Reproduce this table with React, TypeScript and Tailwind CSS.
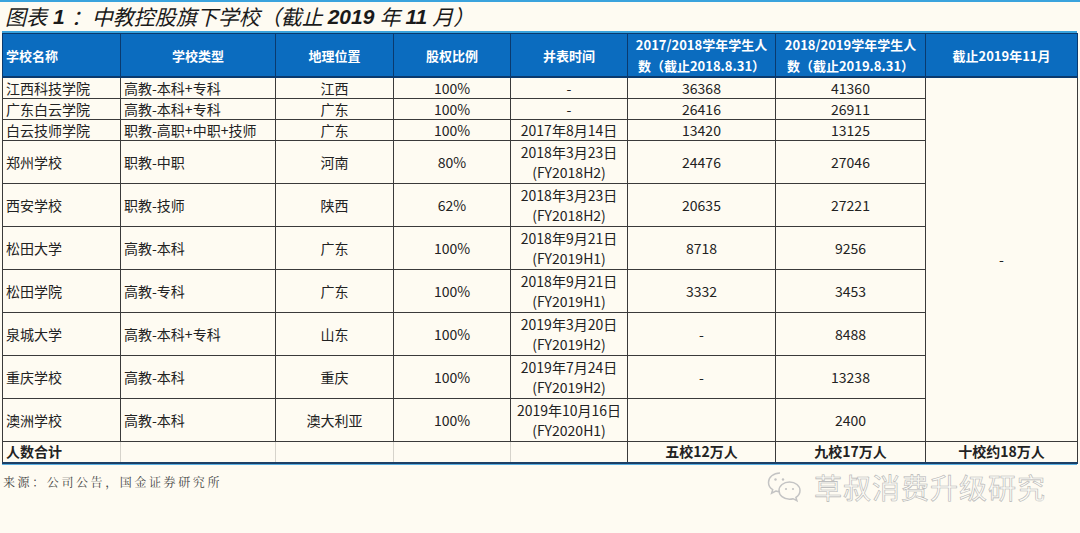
import React from 'react';

type Row = {
  name: string;
  type: string;
  region: string;
  share: string;
  date: string[];
  y2018: string;
  y2019: string;
  tall?: boolean;
};

const rows: Row[] = [
  { name: '江西科技学院', type: '高教-本科+专科', region: '江西', share: '100%', date: ['-'], y2018: '36368', y2019: '41360' },
  { name: '广东白云学院', type: '高教-本科+专科', region: '广东', share: '100%', date: ['-'], y2018: '26416', y2019: '26911' },
  { name: '白云技师学院', type: '职教-高职+中职+技师', region: '广东', share: '100%', date: ['2017年8月14日'], y2018: '13420', y2019: '13125' },
  { name: '郑州学校', type: '职教-中职', region: '河南', share: '80%', date: ['2018年3月23日', '(FY2018H2)'], y2018: '24476', y2019: '27046', tall: true },
  { name: '西安学校', type: '职教-技师', region: '陕西', share: '62%', date: ['2018年3月23日', '(FY2018H2)'], y2018: '20635', y2019: '27221', tall: true },
  { name: '松田大学', type: '高教-本科', region: '广东', share: '100%', date: ['2018年9月21日', '(FY2019H1)'], y2018: '8718', y2019: '9256', tall: true },
  { name: '松田学院', type: '高教-专科', region: '广东', share: '100%', date: ['2018年9月21日', '(FY2019H1)'], y2018: '3332', y2019: '3453', tall: true },
  { name: '泉城大学', type: '高教-本科+专科', region: '山东', share: '100%', date: ['2019年3月20日', '(FY2019H2)'], y2018: '-', y2019: '8488', tall: true },
  { name: '重庆学校', type: '高教-本科', region: '重庆', share: '100%', date: ['2019年7月24日', '(FY2019H2)'], y2018: '-', y2019: '13238', tall: true },
  { name: '澳洲学校', type: '高教-本科', region: '澳大利亚', share: '100%', date: ['2019年10月16日', '(FY2020H1)'], y2018: '', y2019: '2400', tall: true },
];

const td = 'border border-[#3a3a3a] px-[3px] py-0 align-middle';
const th = 'border border-[#0a3a6e] px-[3px] py-0 align-middle font-bold text-white text-[13px] leading-[21px]';

const WeChatIcon = () => (
  <svg width="36" height="34" viewBox="0 0 36 34" fill="none" stroke="#c4c4c4" strokeWidth="1.5">
    <path d="M14 3C7.4 3 2.5 7.2 2.5 12.4c0 3 1.6 5.5 4.2 7.2l-1.1 3.6 4.2-2.2c1.3.4 2.7.6 4.2.6" />
    <path d="M23.5 12c-6 0-10.5 3.8-10.5 8.6s4.5 8.6 10.5 8.6c1.3 0 2.5-.2 3.6-.5l3.8 2-1-3.2c2.5-1.6 4.1-4 4.1-6.9 0-4.8-4.5-8.6-10.5-8.6z" />
    <circle cx="9.5" cy="9.5" r="1.2" fill="#c4c4c4" stroke="none" />
    <circle cx="17" cy="9.5" r="1.2" fill="#c4c4c4" stroke="none" />
    <circle cx="20" cy="19" r="1.1" fill="#c4c4c4" stroke="none" />
    <circle cx="27" cy="19" r="1.1" fill="#c4c4c4" stroke="none" />
  </svg>
);

export default function App() {
  return (
    <div
      className="w-[1080px] h-[533px] overflow-hidden bg-[#fefbf2] text-[#222]"
      style={{ fontFamily: '"Noto Sans CJK SC", "Noto Sans", sans-serif' }}
    >
      <div className="h-[2px] bg-[#3aa3dd]" />
      {/* Title */}
      <div className="h-[29px] pl-[5px] flex items-center text-[21px] italic text-[#1a1a1a] leading-none">
        图表<span className="font-bold mx-[6px]" style={{ fontFamily: '"Liberation Sans", sans-serif' }}>1</span>：中教控股旗下学校（截止
        <span className="font-bold mx-[5px]" style={{ fontFamily: '"Liberation Sans", sans-serif' }}>2019</span>年
        <span className="font-bold mx-[5px]" style={{ fontFamily: '"Liberation Sans", sans-serif' }}>11</span>月）
      </div>

      <div className="ml-[2px] w-[1075px] border-t-[2px] border-[#3aa3dd]">
        <table className="table-fixed border-collapse w-[1075px] text-[14px] leading-[19px]">
          <colgroup>
            <col className="w-[118px]" />
            <col className="w-[155px]" />
            <col className="w-[118px]" />
            <col className="w-[117px]" />
            <col className="w-[117px]" />
            <col className="w-[148px]" />
            <col className="w-[150px]" />
            <col className="w-[152px]" />
          </colgroup>
          <thead>
            <tr className="h-[42px] bg-[#0b6cbf] border-b-[2px] border-[#0a3a6e]">
              <th className={`${th} text-left`}>学校名称</th>
              <th className={`${th} text-center`}>学校类型</th>
              <th className={`${th} text-center`}>地理位置</th>
              <th className={`${th} text-center`}>股权比例</th>
              <th className={`${th} text-center`}>并表时间</th>
              <th className={`${th} text-center`}>
                2017/2018学年学生人
                <br />
                数（截止2018.8.31）
              </th>
              <th className={`${th} text-center`}>
                2018/2019学年学生人
                <br />
                数（截止2019.8.31）
              </th>
              <th className={`${th} text-center`}>截止2019年11月</th>
            </tr>
          </thead>
          <tbody>
            {rows.map((r, i) => (
              <tr key={r.name} className={r.tall ? 'h-[43px]' : i === 2 ? 'h-[21px]' : 'h-[20px]'}>
                <td className={`${td} text-left`}>{r.name}</td>
                <td className={`${td} text-left`}>{r.type}</td>
                <td className={`${td} text-center`}>{r.region}</td>
                <td className={`${td} text-center`}>{r.share}</td>
                <td className={`${td} text-center`}>
                  {r.date.map((d) => (
                    <div key={d} className="leading-[20px]">
                      {d}
                    </div>
                  ))}
                </td>
                <td className={`${td} text-center`}>{r.y2018}</td>
                <td className={`${td} text-center`}>{r.y2019}</td>
                {i === 0 && (
                  <td rowSpan={rows.length} className={`${td} text-center`}>
                    -
                  </td>
                )}
              </tr>
            ))}
            <tr className="h-[21px] font-bold border-b-[2px] border-[#1b3f66]">
              <td className="border-l border-[#3a3a3a] border-r border-r-[#d6d3cb] px-[3px] text-left">人数合计</td>
              <td className="border-r border-[#d6d3cb]" />
              <td className="border-r border-[#d6d3cb]" />
              <td className="border-r border-[#d6d3cb]" />
              <td className="border-r border-[#3a3a3a]" />
              <td className={`${td} text-center`}>五校12万人</td>
              <td className={`${td} text-center`}>九校17万人</td>
              <td className={`${td} text-center`}>十校约18万人</td>
            </tr>
          </tbody>
        </table>
        <div className="h-[1px] bg-[#5aaee0]" />
      </div>

      <div className="flex items-start justify-between pr-[34px]">
        <div
          className="pl-[3px] pt-[8px] text-[12px] tracking-[2.6px] text-[#444]"
          style={{ fontFamily: '"Noto Serif CJK SC", "Liberation Serif", "Noto Sans CJK SC", serif' }}
        >
          来源：公司公告，国金证券研究所
        </div>
        <div className="flex items-center gap-[12px] pt-[5px]">
          <WeChatIcon />
          <span className="text-[28px] text-[#fcfbf6] leading-none tracking-[1px] [-webkit-text-stroke:0.6px_#b4b4b4]">
            草叔消费升级研究
          </span>
        </div>
      </div>
    </div>
  );
}
